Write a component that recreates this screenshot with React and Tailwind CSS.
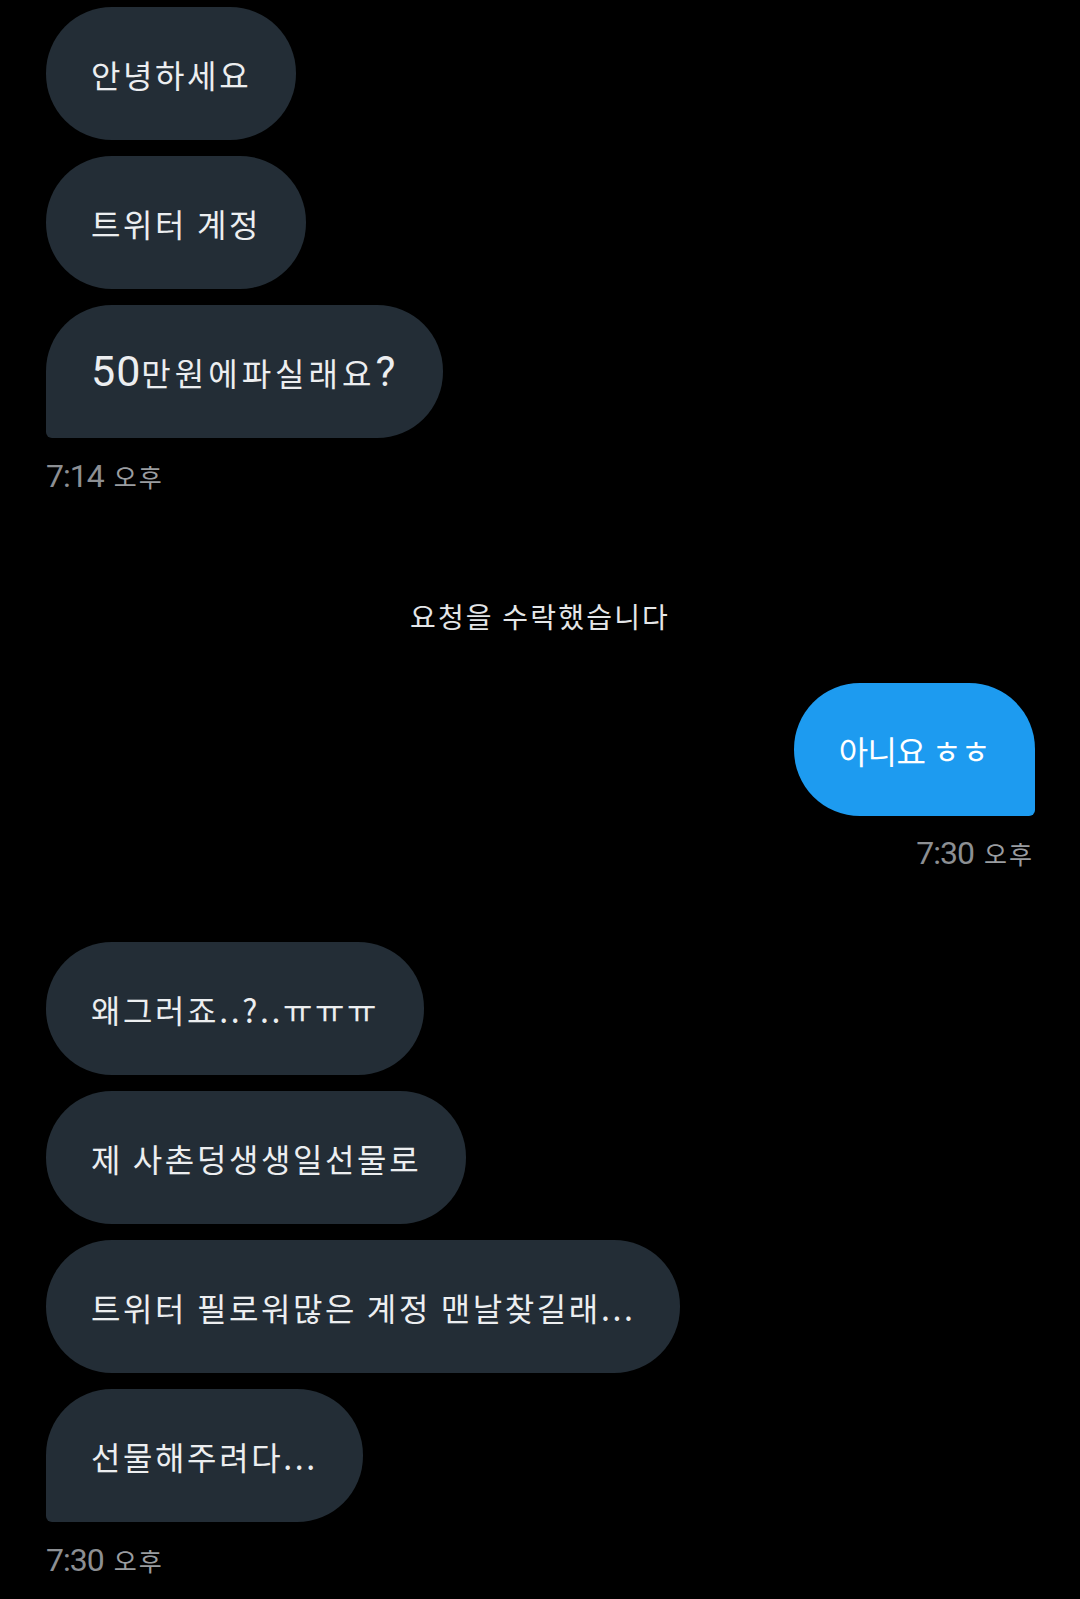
import React from "react";

const bubbleBase =
  "h-[133px] flex items-center px-[45px] text-[32px] leading-none whitespace-nowrap text-[#eceef0]";

function Left({ text, last }) {
  return (
    <div className="flex">
      <div
        className={`${bubbleBase} tracking-[2.6px] bg-[#232d36] ${
          last ? "rounded-[66px] rounded-bl-[6px]" : "rounded-[66px]"
        }`}
      >
        {text}
      </div>
    </div>
  );
}

function Stamp({ time, right }) {
  return (
    <div
      className={`h-[36px] flex items-center gap-[10px] ${
        right ? "justify-end" : "justify-start"
      }`}
    >
      <span
        className="text-[32px] tracking-[-1px] text-[#8c8f93] leading-none"
        style={{ fontFamily: "Roboto, 'Liberation Sans', sans-serif" }}
      >
        {time}
      </span>
      <span className="text-[25px] tracking-[2px] text-[#9a9da1] leading-none">오후</span>
    </div>
  );
}

export default function App() {
  return (
    <div
      className="w-[1080px] min-h-[1599px] bg-black px-[46px] pt-[7px] flex flex-col"
      style={{ fontFamily: "'Noto Sans CJK KR', 'Noto Sans', sans-serif" }}
    >
      <div className="flex flex-col gap-[16px]">
        <Left text="안녕하세요" />
        <Left text="트위터 계정" />
        <Left
          last
          text={
            <>
              <span style={{ fontFamily: "Roboto, sans-serif" }} className="text-[43px] tracking-[1px]">
                50
              </span>
              <span className="tracking-[4px]">만원에파실래요</span>
              <span style={{ fontFamily: "Roboto, sans-serif" }} className="text-[42px]">
                ?
              </span>
            </>
          }
        />
      </div>
      <div className="mt-[20px]">
        <Stamp time="7:14" />
      </div>

      <div className="mt-[102px] h-[40px] flex items-center justify-center text-[28px] tracking-[2.2px] text-[#e4e6e8]">
        요청을 수락했습니다
      </div>

      <div className="mt-[47px] flex justify-end -mr-[1px]">
        <div className={`${bubbleBase} tracking-[-0.5px] bg-[#1d9bf0] text-white rounded-[66px] rounded-br-[6px]`}>
          아니요 ㅎㅎ
        </div>
      </div>
      <div className="mt-[19px]">
        <Stamp time="7:30" right />
      </div>

      <div className="mt-[71px] flex flex-col gap-[16px]">
        <Left text="왜그러죠..?..ㅠㅠㅠ" />
        <Left text="제 사촌덩생생일선물로" />
        <Left text="트위터 필로워많은 계정 맨날찾길래..." />
        <Left last text="선물해주려다..." />
      </div>
      <div className="mt-[20px]">
        <Stamp time="7:30" />
      </div>
    </div>
  );
}
